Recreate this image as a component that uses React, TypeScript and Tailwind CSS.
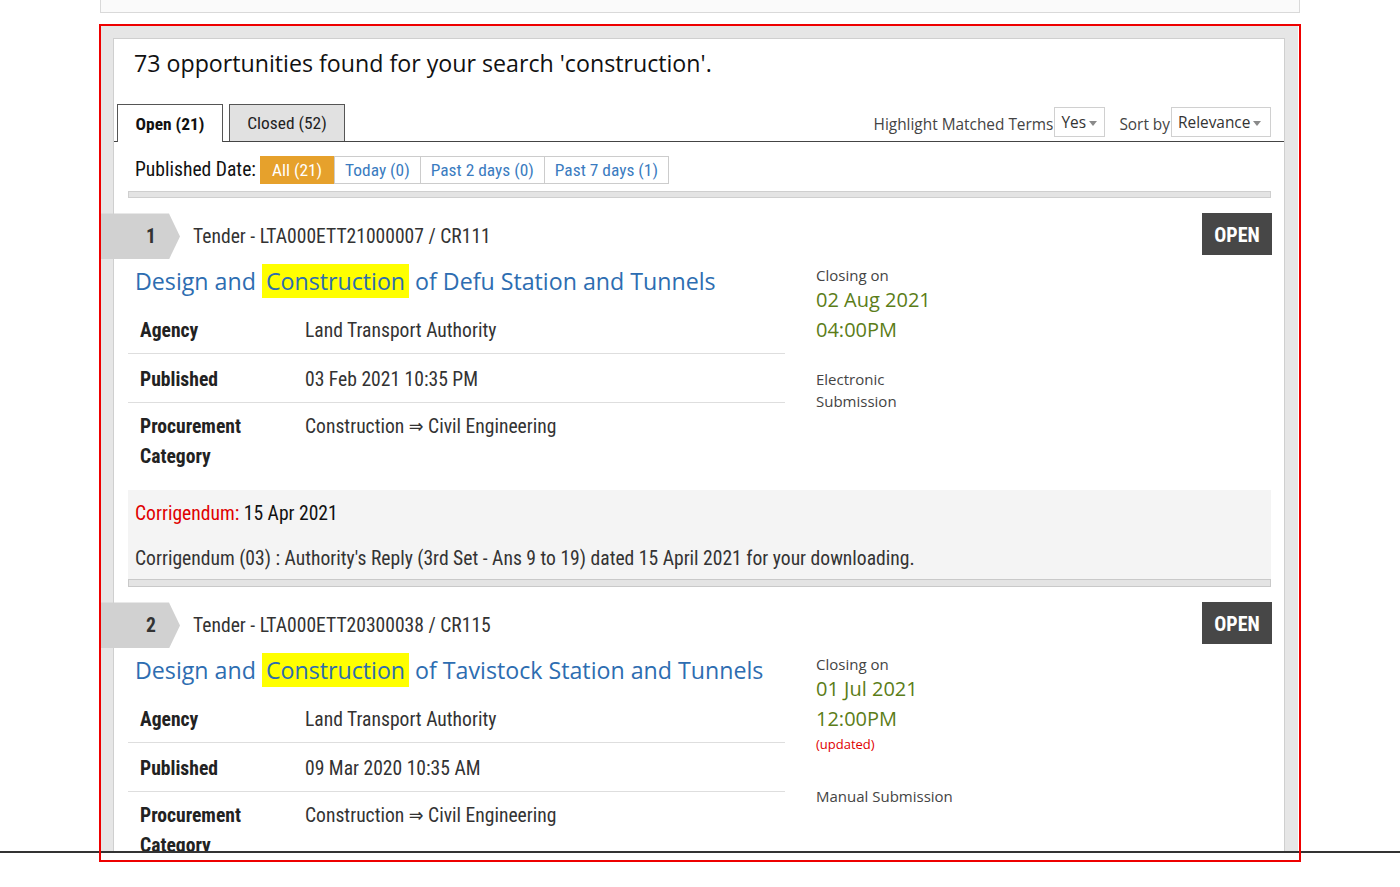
import React from 'react'

const COND = "font-['Roboto_Condensed','Liberation_Sans_Narrow','DejaVu_Sans_Condensed','Arial_Narrow',sans-serif]"
const OPEN = "font-['Open_Sans',sans-serif]"

type Tender = {
  no: number
  ref: string
  pre: string
  hit: string
  post: string
  agency: string
  published: string
  category: string
  closeDate: string
  closeTime: string
  updated?: boolean
  submission: React.ReactNode
  submissionGap: string
  corrigendum?: { date: string; text: string }
}

const tenders: Tender[] = [
  {
    no: 1,
    ref: 'Tender - LTA000ETT21000007 / CR111',
    pre: 'Design and',
    hit: 'Construction',
    post: 'of Defu Station and Tunnels',
    agency: 'Land Transport Authority',
    published: '03 Feb 2021 10:35 PM',
    category: 'Construction \u21D2 Civil Engineering',
    closeDate: '02 Aug 2021',
    closeTime: '04:00PM',
    submission: (
      <>
        Electronic
        <br />
        Submission
      </>
    ),
    submissionGap: 'mt-[23px]',
    corrigendum: {
      date: '15 Apr 2021',
      text: "Corrigendum (03) : Authority's Reply (3rd Set - Ans 9 to 19) dated 15 April 2021 for your downloading.",
    },
  },
  {
    no: 2,
    ref: 'Tender - LTA000ETT20300038 / CR115',
    pre: 'Design and',
    hit: 'Construction',
    post: 'of Tavistock Station and Tunnels',
    agency: 'Land Transport Authority',
    published: '09 Mar 2020 10:35 AM',
    category: 'Construction \u21D2 Civil Engineering',
    closeDate: '01 Jul 2021',
    closeTime: '12:00PM',
    updated: true,
    submission: 'Manual Submission',
    submissionGap: 'mt-[31px]',
  },
]

function Caret() {
  return <span className="ml-[3px] mt-[1px] inline-block border-x-[4px] border-t-[5px] border-x-transparent border-t-[#8a8a8a]" />
}

function InfoRow({ label, children, last }: { label: React.ReactNode; children: React.ReactNode; last?: boolean }) {
  return (
    <div
      className={`grid grid-cols-[177px_1fr] leading-[30px] text-[19.6px] ${
        last ? 'pb-[8px] pt-[9px]' : 'border-b border-[#dedede] pb-[7px] pt-[11px]'
      }`}
    >
      <div className="pl-[12px] font-bold text-[#222]">{label}</div>
      <div className="text-[#333]">{children}</div>
    </div>
  )
}

function TenderItem({ t }: { t: Tender }) {
  return (
    <div className="mt-[15px]">
      <div className="flex items-start">
        <div className="-ml-[27px] flex h-[46px] w-[79px] items-center bg-[#d1d1d1] pl-[45px] text-[19.6px] font-bold text-[#333] [clip-path:polygon(0_0,68px_0,79px_50%,68px_100%,0_100%)]">
          {t.no}
        </div>
        <div className="ml-[13px] pt-px text-[19.6px] leading-[46px] text-[#333]">{t.ref}</div>
        <div className="ml-auto mr-[-1px] flex h-[42px] w-[70px] items-center justify-center bg-[#474747] pt-px text-[20px] font-bold text-white">
          OPEN
        </div>
      </div>

      <div className="mt-[4px] flex">
        <div className="w-[657px]">
          <h3 className={`${OPEN} flex h-[34px] items-center whitespace-nowrap pl-[7px] text-[23.2px] leading-[34px] text-[#2d6db1]`}>
            {t.pre}
            <span className="ml-[6px] mr-[6px] bg-[#ffff00] px-[4px]">{t.hit}</span>
            {t.post}
          </h3>
          <div className="mt-[7px]">
            <InfoRow label="Agency">{t.agency}</InfoRow>
            <InfoRow label="Published">{t.published}</InfoRow>
            <InfoRow
              label={
                <>
                  Procurement
                  <br />
                  Category
                </>
              }
              last
            >
              {t.category}
            </InfoRow>
          </div>
        </div>

        <div className={`${OPEN} ml-[31px] mt-[1px]`}>
          <p className="text-[15px] leading-[20px] text-[#444]">Closing on</p>
          <p className="text-[20px] leading-[30px] text-[#5b7d18]">{t.closeDate}</p>
          <p className="text-[20px] leading-[30px] text-[#5b7d18]">{t.closeTime}</p>
          {t.updated && <p className="text-[13px] leading-[20px] text-[#e00000]">(updated)</p>}
          <p className={`${t.submissionGap} text-[15px] leading-[22px] text-[#444]`}>{t.submission}</p>
        </div>
      </div>

      {t.corrigendum && (
        <div className="mt-[10px] bg-[#f4f4f4]">
          <div className="px-[7px] pb-[5px] pt-[9px] text-[19.6px] leading-[30px]">
            <p>
              <span className="text-[#e00000]">Corrigendum:</span>{' '}
              <span className="text-[#111]">{t.corrigendum.date}</span>
            </p>
            <p className="mt-[15px] text-[#333]">{t.corrigendum.text}</p>
          </div>
          <div className="h-[8px] border border-[#c9c9c9] bg-[#e4e4e4]" />
        </div>
      )}
    </div>
  )
}

export default function App() {
  const dateFilters = [
    { label: 'All (21)', active: true },
    { label: 'Today (0)' },
    { label: 'Past 2 days (0)' },
    { label: 'Past 7 days (1)' },
  ]

  return (
    <div className={`${COND} relative h-[887px] overflow-hidden bg-white`}>
      {/* previous panel, cut off at the top */}
      <div className="mx-[100px] h-[13px] border-x border-b border-[#d9d9d9] bg-[#fafafa]" />

      <section className="ml-[101px] mt-[13px] w-[1197px] bg-[#e6e6e6] pl-[12px] pr-[13px] pt-[12px]">
        <div className="border border-[#cfcfcf] bg-white pb-[40px]">
          <h2 className={`${OPEN} pl-[20px] pt-[9px] text-[23.2px] leading-[30px] text-[#111]`}>
            73 opportunities found for your search 'construction'.
          </h2>

          {/* tabs */}
          <div className="mt-[26px] flex items-end border-b border-[#444] pl-[3px] pr-[13px]">
            <div className="-mb-px flex h-[38px] w-[106px] items-center justify-center border border-b-0 border-[#555] bg-white pt-px text-[17.4px] font-bold text-[#111]">
              Open (21)
            </div>
            <div className="ml-[6px] flex h-[37px] w-[116px] items-center justify-center border border-b-0 border-[#555] bg-[#e1e1e1] pt-px text-[17.4px] text-[#222]">
              Closed (52)
            </div>

            <div className={`${OPEN} mb-[4px] ml-auto flex items-center text-[15.4px] text-[#444]`}>
              <span className="pt-[5px]">Highlight Matched Terms</span>
              <div className="ml-px flex h-[30px] w-[51px] items-center border border-[#d0d0d0] pl-[6px] pt-[2px] text-[#333]">
                Yes
                <Caret />
              </div>
              <span className="ml-[14px] pt-[5px]">Sort by</span>
              <div className="ml-px flex h-[30px] w-[100px] items-center border border-[#d0d0d0] pl-[6px] pt-[2px] text-[#333]">
                Relevance
                <Caret />
              </div>
            </div>
          </div>

          {/* published date filter */}
          <div className="mt-[13px] flex items-center pl-[21px]">
            <span className="text-[19.6px] text-[#111]">Published Date:</span>
            <div className="ml-[4px] flex">
              {dateFilters.map((f, i) => (
                <div
                  key={f.label}
                  className={`flex h-[28px] items-center px-[10px] pt-px text-[17.4px] ${
                    f.active
                      ? 'bg-[#e6a12c] px-[12px] text-white'
                      : `border border-[#cccccc] text-[#3a7bc0] ${i > 1 ? 'border-l-0' : ''}`
                  }`}
                >
                  {f.label}
                </div>
              ))}
            </div>
          </div>

          <div className="ml-[14px] mr-[13px] mt-[7px] h-[7px] border border-[#cfcfcf] bg-[#e4e4e4]" />

          <div className="pl-[14px] pr-[13px]">
            {tenders.map((t) => (
              <TenderItem key={t.no} t={t} />
            ))}
          </div>
        </div>
      </section>

      {/* fixed bottom bar */}
      <div className="absolute left-0 top-[851px] z-10 h-[36px] w-full border-t-2 border-[#333] bg-white" />

      {/* selection outline */}
      <div className="pointer-events-none absolute left-[99px] top-[24px] z-20 h-[838px] w-[1202px] border-2 border-[#ee0000]" />
    </div>
  )
}
